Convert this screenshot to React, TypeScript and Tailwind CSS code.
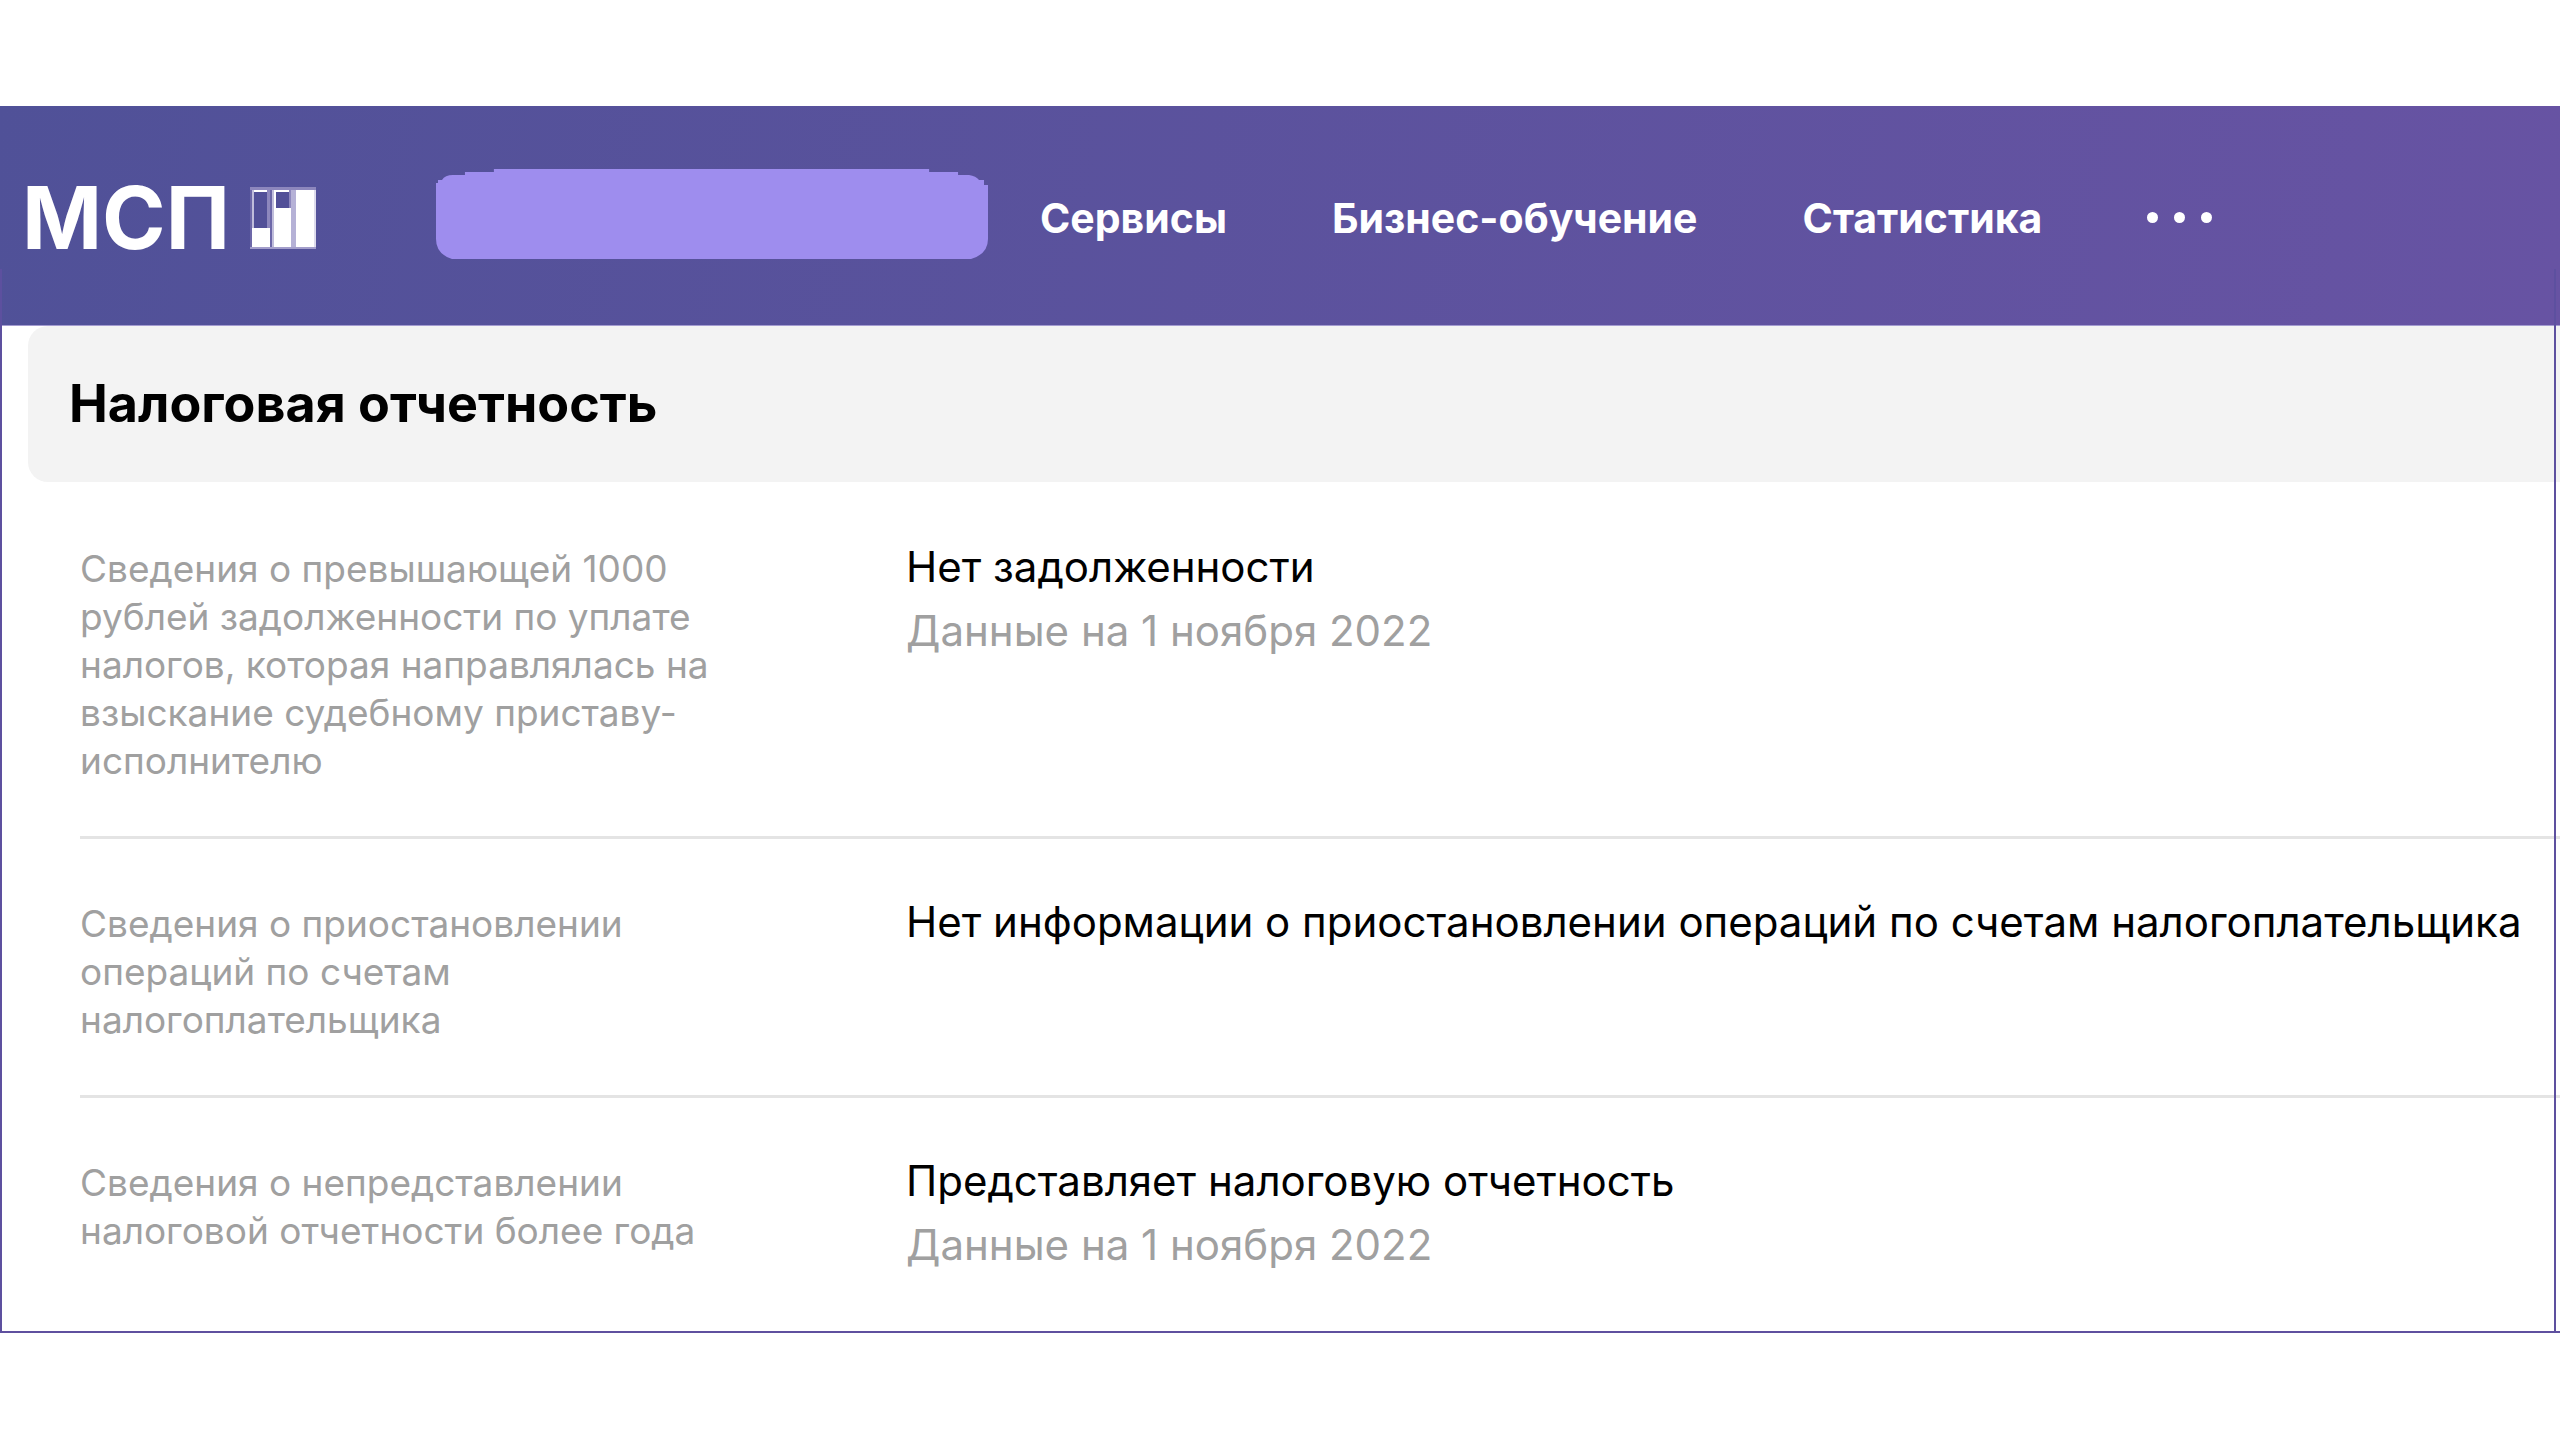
const navItems = ["Сервисы", "Бизнес-обучение", "Статистика"];

type Row = { label: string; value: string; note?: string };

const rows: Row[] = [
  {
    label:
      "Сведения о превышающей 1000 рублей задолженности по уплате налогов, которая направлялась на взыскание судебному приставу-исполнителю",
    value: "Нет задолженности",
    note: "Данные на 1 ноября 2022",
  },
  {
    label: "Сведения о приостановлении операций по счетам налогоплательщика",
    value: "Нет информации о приостановлении операций по счетам налогоплательщика",
  },
  {
    label: "Сведения о непредставлении налоговой отчетности более года",
    value: "Представляет налоговую отчетность",
    note: "Данные на 1 ноября 2022",
  },
];

function LogoMark() {
  return (
    <svg width="66" height="62" viewBox="0 0 66 62" aria-hidden="true" shapeRendering="crispEdges">
      <rect x="0" y="0" width="66" height="3" fill="#8d87bd" />
      <rect x="0" y="60" width="66" height="2" fill="#a39ecb" />
      <rect x="0" y="3" width="2" height="57" fill="#6d68a9" />
      <rect x="2" y="3" width="18" height="57" fill="#fff" />
      <rect x="4" y="5" width="14" height="36" fill="#525098" />
      <rect x="2" y="3" width="2" height="38" fill="#c0bddb" />
      <rect x="17" y="3" width="4" height="38" fill="#8d87bd" />
      <rect x="20" y="3" width="2" height="57" fill="#6d68a9" />
      <rect x="22" y="3" width="2" height="57" fill="#c0bddb" />
      <rect x="24" y="3" width="17" height="57" fill="#fff" />
      <rect x="26" y="5" width="14" height="16" fill="#525098" />
      <rect x="39" y="3" width="3" height="18" fill="#8d87bd" />
      <rect x="41" y="3" width="5" height="57" fill="#b5b1d6" />
      <rect x="46" y="3" width="18" height="57" fill="#fff" />
      <rect x="64" y="3" width="2" height="57" fill="#dddbec" />
    </svg>
  );
}

function Header() {
  return (
    <header className="flex h-[220px] items-center border-b border-[#a39bd0] bg-linear-100 from-[#505198] to-[#6753a3] pt-1 pl-[22px] text-white">
      <a href="#" className="flex w-[414px] shrink-0 items-center gap-5 text-[86px] leading-none font-bold">
        МСП
        <LogoMark />
      </a>
      <button type="button" aria-label="Поиск" className="mb-2 shrink-0">
        <svg width="552" height="90" viewBox="0 0 553 90" preserveAspectRatio="none" aria-hidden="true">
          <path
            d="M58 0H494V3H523V6H534Q541 7 544 11H549V16H553V70Q553 85 536 90H16Q0 85 0 70V14H2V11H6Q9 6 17 6H29V3H58Z"
            fill="#9e8dee"
          />
        </svg>
      </button>
      <nav className="ml-[52px] flex items-center gap-[105px] text-[41px] leading-[50px] font-bold">
        {navItems.map((item) => (
          <a key={item} href="#" className="whitespace-nowrap">
            {item}
          </a>
        ))}
        <button type="button" aria-label="Ещё" className="flex gap-4">
          <span className="size-[11px] rounded-full bg-white" />
          <span className="size-[11px] rounded-full bg-white" />
          <span className="size-[11px] rounded-full bg-white" />
        </button>
      </nav>
    </header>
  );
}

export default function App() {
  return (
    <div className="min-h-screen overflow-x-hidden bg-white pt-[106px] font-['Inter','Noto_Sans',sans-serif] text-black">
      <div className="relative">
        <Header />
        <main className="border-b-2 border-[#5f509f] pb-[3px]">
          <h1 className="ml-7 flex h-[156px] items-center rounded-l-[20px] bg-[#f3f3f3] pl-[41px] text-[52px] leading-[64px] font-bold">
            Налоговая отчетность
          </h1>
          <dl className="ml-20 divide-y-[3px] divide-[#e4e4e4] pt-[2px]">
            {rows.map((row) => (
              <div key={row.label} className="flex items-start pt-[51px] pb-[51px]">
                <dt className="w-[826px] shrink-0 pt-[10px] pr-[186px] text-[37px] leading-[48px] text-[#a0a0a0]">
                  {row.label}
                </dt>
                <dd className="text-[42px] leading-[64px]">
                  <p>{row.value}</p>
                  {row.note && <p className="text-[#a0a0a0]">{row.note}</p>}
                </dd>
              </div>
            ))}
          </dl>
        </main>
        <div className="pointer-events-none absolute top-[163px] right-1 bottom-0 left-0 border-x-2 border-[#5d509f]" />
      </div>
    </div>
  );
}
